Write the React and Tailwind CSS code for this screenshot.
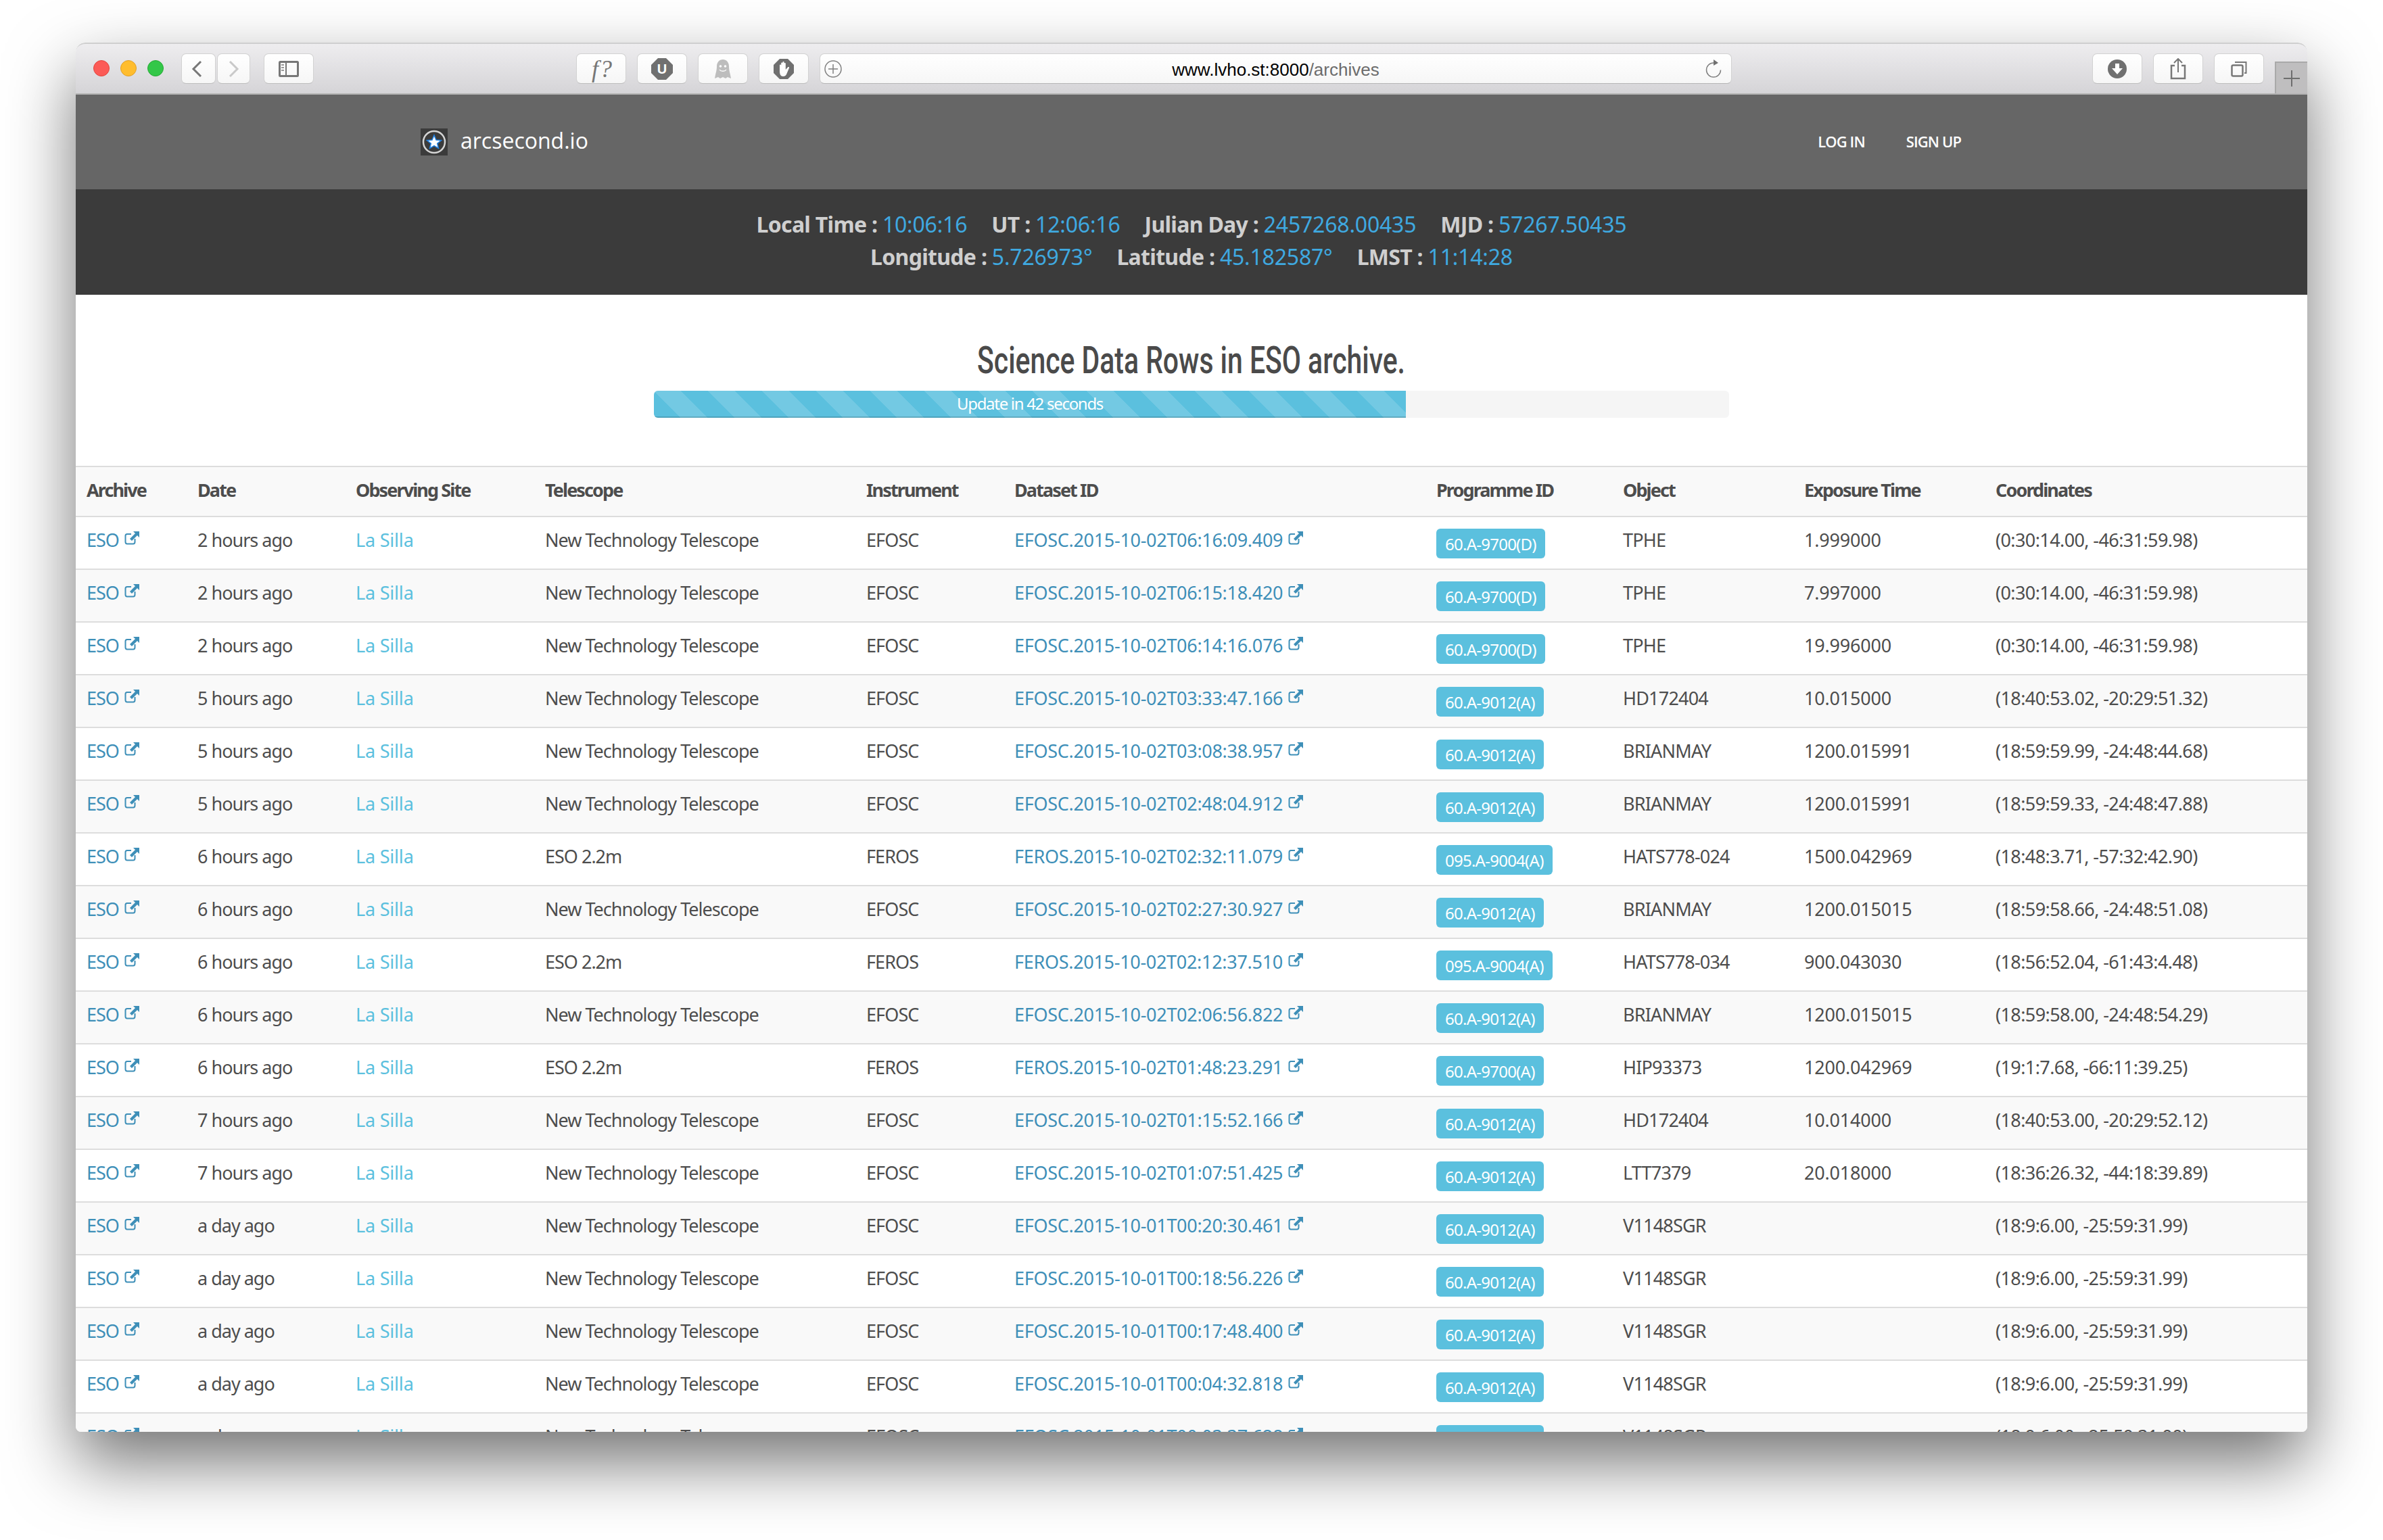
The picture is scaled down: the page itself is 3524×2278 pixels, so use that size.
const NTT = 'New Technology Telescope'
const A9012 = '60.A-9012(A)'
const A9700D = '60.A-9700(D)'
const A9004 = '095.A-9004(A)'
const V1148 = '(18:9:6.00, -25:59:31.99)'

// date, telescope, instrument, dataset suffix, programme, object, exposure, coords
const rows = [
  ['2 hours ago', NTT, 'EFOSC', '2015-10-02T06:16:09.409', A9700D, 'TPHE', '1.999000', '(0:30:14.00, -46:31:59.98)'],
  ['2 hours ago', NTT, 'EFOSC', '2015-10-02T06:15:18.420', A9700D, 'TPHE', '7.997000', '(0:30:14.00, -46:31:59.98)'],
  ['2 hours ago', NTT, 'EFOSC', '2015-10-02T06:14:16.076', A9700D, 'TPHE', '19.996000', '(0:30:14.00, -46:31:59.98)'],
  ['5 hours ago', NTT, 'EFOSC', '2015-10-02T03:33:47.166', A9012, 'HD172404', '10.015000', '(18:40:53.02, -20:29:51.32)'],
  ['5 hours ago', NTT, 'EFOSC', '2015-10-02T03:08:38.957', A9012, 'BRIANMAY', '1200.015991', '(18:59:59.99, -24:48:44.68)'],
  ['5 hours ago', NTT, 'EFOSC', '2015-10-02T02:48:04.912', A9012, 'BRIANMAY', '1200.015991', '(18:59:59.33, -24:48:47.88)'],
  ['6 hours ago', 'ESO 2.2m', 'FEROS', '2015-10-02T02:32:11.079', A9004, 'HATS778-024', '1500.042969', '(18:48:3.71, -57:32:42.90)'],
  ['6 hours ago', NTT, 'EFOSC', '2015-10-02T02:27:30.927', A9012, 'BRIANMAY', '1200.015015', '(18:59:58.66, -24:48:51.08)'],
  ['6 hours ago', 'ESO 2.2m', 'FEROS', '2015-10-02T02:12:37.510', A9004, 'HATS778-034', '900.043030', '(18:56:52.04, -61:43:4.48)'],
  ['6 hours ago', NTT, 'EFOSC', '2015-10-02T02:06:56.822', A9012, 'BRIANMAY', '1200.015015', '(18:59:58.00, -24:48:54.29)'],
  ['6 hours ago', 'ESO 2.2m', 'FEROS', '2015-10-02T01:48:23.291', '60.A-9700(A)', 'HIP93373', '1200.042969', '(19:1:7.68, -66:11:39.25)'],
  ['7 hours ago', NTT, 'EFOSC', '2015-10-02T01:15:52.166', A9012, 'HD172404', '10.014000', '(18:40:53.00, -20:29:52.12)'],
  ['7 hours ago', NTT, 'EFOSC', '2015-10-02T01:07:51.425', A9012, 'LTT7379', '20.018000', '(18:36:26.32, -44:18:39.89)'],
  ['a day ago', NTT, 'EFOSC', '2015-10-01T00:20:30.461', A9012, 'V1148SGR', '', V1148],
  ['a day ago', NTT, 'EFOSC', '2015-10-01T00:18:56.226', A9012, 'V1148SGR', '', V1148],
  ['a day ago', NTT, 'EFOSC', '2015-10-01T00:17:48.400', A9012, 'V1148SGR', '', V1148],
  ['a day ago', NTT, 'EFOSC', '2015-10-01T00:04:32.818', A9012, 'V1148SGR', '', V1148],
  ['a day ago', NTT, 'EFOSC', '2015-10-01T00:03:37.628', A9012, 'V1148SGR', '', V1148],
]

const headers = [
  ['Archive', 'w-[164px]'],
  ['Date', 'w-[234px]'],
  ['Observing Site', 'w-[280px]'],
  ['Telescope', 'w-[475px]'],
  ['Instrument', 'w-[219px]'],
  ['Dataset ID', 'w-[624px]'],
  ['Programme ID', 'w-[276px]'],
  ['Object', 'w-[268px]'],
  ['Exposure Time', 'w-[283px]'],
  ['Coordinates', 'w-[477px]'],
]

function ExternalIcon() {
  return (
    <svg viewBox="0 0 22 20" className="inline-block w-[22px] h-[20px] ml-[8px] align-[3px]" fill="none">
      <path d="M10 4H4Q1.500 4 1.500 6.500V15.500Q1.500 18.500 4 18.500H13Q15.500 18.500 15.500 15.500V11" stroke="currentColor" strokeWidth="2" />
      <path d="M13 0H22V9L19 6L11 14L8 11L16 3Z" fill="currentColor" />
    </svg>
  )
}

function ToolButton({ className = 'w-[74px]', children }) {
  return (
    <div className={`h-[45px] rounded-[7px] bg-gradient-to-b from-white to-[#f6f6f6] border border-[#d2d2d2] border-b-[#bdbdbd] flex items-center justify-center shrink-0 ${className}`}>
      {children}
    </div>
  )
}

function Toolbar() {
  return (
    <div className="h-[77px] shrink-0 flex bg-gradient-to-b from-[#eeedef] to-[#d5d4d7] border-t-2 border-b-2 border-t-[#cfcfcf] border-b-[#b4b4b4] rounded-t-[14px] pt-[14px]">
      <div className="flex gap-4 ml-[26px] mt-[10px] h-6">
        <div className="w-6 h-6 rounded-full bg-[#fc5b57] border border-[#e2463f]" />
        <div className="w-6 h-6 rounded-full bg-[#ffbd2e] border border-[#e1a028]" />
        <div className="w-6 h-6 rounded-full bg-[#33c748] border border-[#27aa35]" />
      </div>
      <ToolButton className="w-[51px] ml-[26px] pr-[5px]">
        <svg width="16" height="26" viewBox="0 0 16 26" fill="none"><path d="M14 2L3 13L14 24" stroke="#777" strokeWidth="3" /></svg>
      </ToolButton>
      <ToolButton className="w-[49px] ml-[2px]">
        <svg width="16" height="26" viewBox="0 0 16 26" fill="none"><path d="M2 2L13 13L2 24" stroke="#c9c9c9" strokeWidth="3" /></svg>
      </ToolButton>
      <ToolButton className="w-[74px] ml-[20px]">
        <svg width="30" height="24" viewBox="0 0 30 24" fill="none">
          <rect x="1.500" y="1.500" width="27" height="21" rx="1" stroke="#777" strokeWidth="3" />
          <path d="M11 2V22" stroke="#777" strokeWidth="2" />
          <path d="M4 6H8M4 10H8M4 14H8" stroke="#999" strokeWidth="2" />
        </svg>
      </ToolButton>
      <ToolButton className="w-[74px] ml-[388px] pl-[4px]">
        <span className="font-['Liberation_Serif'] italic text-[36px] leading-none text-[#777] tracking-[2px]">f?</span>
      </ToolButton>
      <ToolButton className="w-[74px] ml-4">
        <div className="relative w-8 h-8 flex items-center justify-center">
          <svg width="32" height="32" viewBox="0 0 32 32" className="absolute inset-0"><path d="M10 0H22L32 10V22L22 32H10L0 22V10Z" fill="#707070" /></svg>
          <span className="relative font-['Liberation_Sans'] font-bold text-[20px] leading-none text-white">U</span>
        </div>
      </ToolButton>
      <ToolButton className="w-[74px] ml-4">
        <svg width="26" height="30" viewBox="0 0 26 30">
          <path d="M1 29C2 22 4 18 4 11C4 5 8 1 13 1C18 1 22 5 22 11C22 18 24 22 25 29L20 27L17 29L13 27L9 29L6 27Z" fill="#bdbdbd" />
          <circle cx="9.500" cy="11" r="1.800" fill="#fff" />
          <circle cx="16.500" cy="11" r="1.800" fill="#fff" />
          <path d="M8 16C10 19 16 19 18 16" stroke="#fff" strokeWidth="1.300" fill="none" />
        </svg>
      </ToolButton>
      <ToolButton className="w-[74px] ml-4">
        <svg width="30" height="30" viewBox="0 0 30 30">
          <path d="M9 0H21L30 9V21L21 30H9L0 21V9Z" fill="#707070" />
          <path d="M9 18V9.500a1 1 0 0 1 2.200 0V14V6.500a1 1 0 0 1 2.200 0V14V5a1 1 0 0 1 2.200 0V14V7a1 1 0 0 1 2.200 0V16L21 12.500c1-1 2.500 0 2 1L19 23c-1 2-2.500 3-5 3c-3.500 0-5-3-5-8Z" fill="#fff" />
        </svg>
      </ToolButton>
      <div className="ml-4 w-[1349px] h-[45px] rounded-[7px] bg-gradient-to-b from-white to-[#f6f6f6] border border-[#d2d2d2] border-b-[#b5b5b5] flex items-center shrink-0">
        <div className="w-[40px] pl-[6px] shrink-0">
          <svg width="26" height="26" viewBox="0 0 26 26" fill="none">
            <circle cx="13" cy="13" r="12" stroke="#808080" strokeWidth="1.500" />
            <path d="M13 6V20M6 13H20" stroke="#808080" strokeWidth="1.500" />
          </svg>
        </div>
        <div className="flex-1 text-center font-['Liberation_Sans'] text-[26px] leading-none pt-[2px] text-[#6c6c6c]">
          <span className="text-black">www.lvho.st:8000</span>/archives
        </div>
        <div className="w-[40px] pl-[2px] shrink-0">
          <svg width="24" height="28" viewBox="0 0 24 28" fill="none">
            <path d="M12 5A10.500 10.500 0 1 0 22.500 15.500" stroke="#808080" strokeWidth="1.500" />
            <path d="M12 0L19 5L12 9Z" fill="#707070" />
          </svg>
        </div>
      </div>
      <ToolButton className="w-[74px] ml-[533px]">
        <svg width="28" height="28" viewBox="0 0 28 28">
          <circle cx="14" cy="14" r="14" fill="#707070" />
          <path d="M11 6H17V13H22L14 22L6 13H11Z" fill="#fff" />
        </svg>
      </ToolButton>
      <ToolButton className="w-[74px] ml-4">
        <svg width="24" height="32" viewBox="0 0 24 32" fill="none">
          <path d="M7 11H2V30H22V11H17" stroke="#777" strokeWidth="2.500" />
          <path d="M12 1V21M6 7L12 1L18 7" stroke="#777" strokeWidth="2" />
        </svg>
      </ToolButton>
      <ToolButton className="w-[74px] ml-4">
        <svg width="24" height="24" viewBox="0 0 24 24" fill="none">
          <rect x="1.500" y="6.500" width="16" height="16" rx="2" stroke="#777" strokeWidth="2.500" />
          <path d="M6 2H22.500V18H20" stroke="#777" strokeWidth="2" />
        </svg>
      </ToolButton>
      <div className="ml-4 w-[48px] h-[47px] self-end bg-[#bfbebf] border-l-2 border-t-2 border-[#a9a9a9] flex items-center justify-center shrink-0">
        <svg width="24" height="24" viewBox="0 0 24 24"><path d="M12 0V24M0 12H24" stroke="#6e6e6e" strokeWidth="2" /></svg>
      </div>
    </div>
  )
}

function NavBar() {
  return (
    <div className="h-[140px] bg-[#666666] shrink-0 flex items-center justify-between pl-[510px] pr-[512px]">
      <div className="flex items-center gap-[19px]">
        <div className="w-10 h-10 bg-[#3b3b3b] flex items-center justify-center">
          <svg width="36" height="36" viewBox="0 0 36 36">
            <circle cx="18" cy="18" r="16" fill="none" stroke="#d5d5d5" strokeWidth="2.500" />
            <path d="M18 8L21 15L28.500 15.500L22.700 20.300L24.500 27.500L18 23.600L11.500 27.500L13.300 20.300L7.500 15.500L15 15Z" fill="#fff" stroke="#1f7fe0" strokeWidth="1.500" />
          </svg>
        </div>
        <span className="text-[32px] leading-none pb-[4px] text-white font-['Open_Sans']">arcsecond.io</span>
      </div>
      <div className="flex gap-[61px] text-[22px] text-white font-['Open_Sans'] font-semibold tracking-[-0.900px] pb-[2px]">
        <span>LOG IN</span>
        <span>SIGN UP</span>
      </div>
    </div>
  )
}

function Stat({ label, value }) {
  return (
    <span>
      <span className="font-bold text-[#cfcfcf] tracking-[-0.700px]">{label} : </span>
      <span className="text-[#3fa9e0] tracking-[-0.200px]">{value}</span>
    </span>
  )
}

function StatusBar() {
  return (
    <div className="h-[156px] bg-[#3b3b3b] shrink-0 pt-[28px] text-[32px] leading-[48px] font-['Noto_Sans']">
      <div className="flex justify-center gap-[36px]">
        <Stat label="Local Time" value="10:06:16" />
        <Stat label="UT" value="12:06:16" />
        <Stat label="Julian Day" value="2457268.00435" />
        <Stat label="MJD" value="57267.50435" />
      </div>
      <div className="flex justify-center gap-[36px]">
        <Stat label="Longitude" value="5.726973°" />
        <Stat label="Latitude" value="45.182587°" />
        <Stat label="LMST" value="11:14:28" />
      </div>
    </div>
  )
}

function ProgressPanel() {
  return (
    <div className="h-[253px] shrink-0 flex flex-col items-center pt-[60px]">
      <h1 className="text-[56px] leading-[74px] text-[#4a4a4a] font-['Roboto'] font-medium scale-x-[0.73] whitespace-nowrap">
        Science Data Rows in ESO archive.
      </h1>
      <div className="w-[1590px] h-[40px] mt-[8px] rounded-[6px] bg-[#f5f5f5] overflow-hidden">
        <div className="w-[1112px] h-full bg-[#5bc0de] bg-[linear-gradient(45deg,rgba(255,255,255,.15)_25%,transparent_25%,transparent_50%,rgba(255,255,255,.15)_50%,rgba(255,255,255,.15)_75%,transparent_75%,transparent)] bg-[length:80px_80px] shadow-[inset_0_-2px_0_rgba(0,0,0,.15)] text-center text-white text-[24px] leading-[38px] font-['Noto_Sans'] tracking-[-1.300px]">
          Update in 42 seconds
        </div>
      </div>
    </div>
  )
}

function DataTable() {
  const cell = 'border-t-2 border-[#dddddd] px-4 pt-[14px] h-[78px] align-top text-left leading-[40px] whitespace-nowrap'
  return (
    <table className="table-fixed w-[3300px] border-collapse text-[27px] text-[#4d4d4d] font-['Noto_Sans']">
      <colgroup>
        {headers.map(([name, width]) => <col key={name} className={width} />)}
      </colgroup>
      <thead>
        <tr className="bg-[#f9f9f9]">
          {headers.map(([name]) => (
            <th key={name} className="border-t-2 border-[#dddddd] px-4 pt-[14px] h-[74px] align-top text-left leading-[40px] font-bold whitespace-nowrap tracking-[-1.900px]">{name}</th>
          ))}
        </tr>
      </thead>
      <tbody>
        {rows.map((r, i) => (
          <tr key={r[3]} className={i % 2 ? 'bg-[#f9f9f9]' : 'bg-white'}>
            <td className={`${cell} tracking-[-1px]`}><span className="text-[#3e8fb8]">ESO<ExternalIcon /></span></td>
            <td className={`${cell} tracking-[-1px]`}>{r[0]}</td>
            <td className={`${cell} tracking-[-0.200px]`}><span className="text-[#5bc0de]">La Silla</span></td>
            <td className={`${cell} tracking-[-1px]`}>{r[1]}</td>
            <td className={`${cell} tracking-[-0.900px]`}>{r[2]}</td>
            <td className={`${cell} tracking-[-0.300px]`}><span className="text-[#3e8fb8]">{r[2]}.{r[3]}<ExternalIcon /></span></td>
            <td className={cell}>
              <span className="block w-fit h-[44px] mt-[3px] px-[13px] rounded-[6px] bg-[#5bc0de] text-white text-[24px] leading-[46px] tracking-[-0.750px]">{r[4]}</span>
            </td>
            <td className={`${cell} tracking-[-0.800px]`}>{r[5]}</td>
            <td className={`${cell} tracking-[-0.200px]`}>{r[6]}</td>
            <td className={`${cell} tracking-[-0.600px]`}>{r[7]}</td>
          </tr>
        ))}
      </tbody>
    </table>
  )
}

export default function App() {
  return (
    <div className="w-[3524px] h-[2278px] bg-white overflow-hidden pt-[63px] pl-[112px]">
      <div className="w-[3300px] h-[2055px] flex flex-col rounded-t-[14px] rounded-b-[8px] overflow-hidden bg-white shadow-[0_45px_100px_rgba(0,0,0,0.55)]">
        <Toolbar />
        <NavBar />
        <StatusBar />
        <ProgressPanel />
        <DataTable />
      </div>
    </div>
  )
}
